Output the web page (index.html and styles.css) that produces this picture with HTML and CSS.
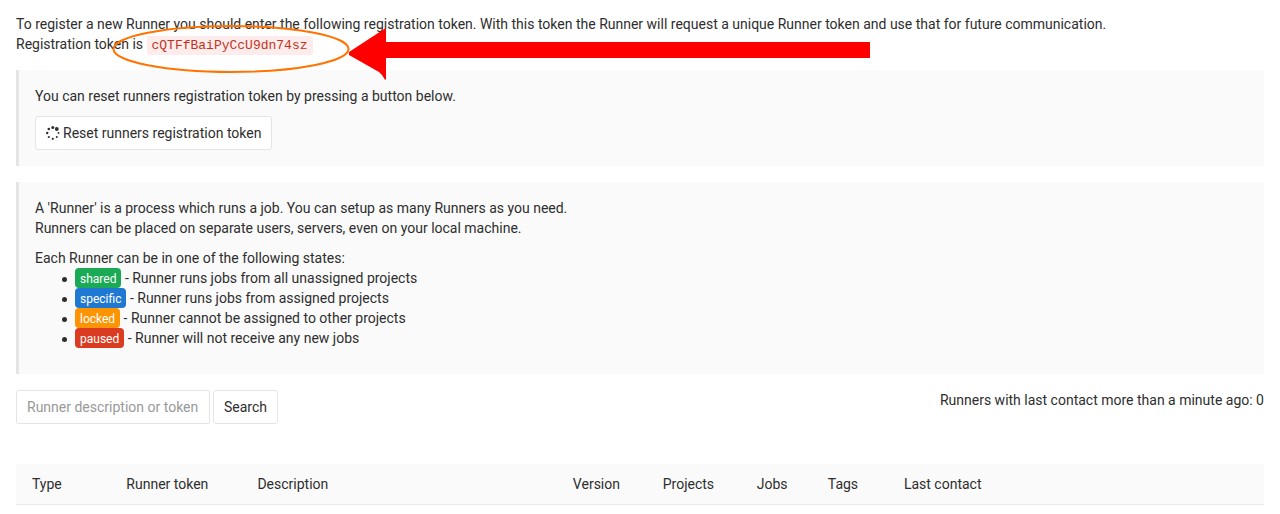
FILE: index.html
```html
<!DOCTYPE html>
<html lang="en">
<head>
<meta charset="utf-8">
<meta name="viewport" content="width=device-width, initial-scale=1">
<title>Runners</title>
<link rel="stylesheet" href="styles.css">
</head>
<body>
<main class="page">
  <section class="intro">
    <p>To register a new Runner you should enter the following registration token. With this token the Runner will request a unique Runner token and use that for future communication.<br>
    Registration token is <code class="token">cQTFfBaiPyCcU9dn74sz</code></p>
    <svg class="callout" width="760" height="60" viewBox="112 22 760 60" aria-hidden="true">
      <ellipse cx="231" cy="49" rx="117.500" ry="23" fill="none" stroke="#ff7400" stroke-width="2"/>
      <path d="M349 52 385 28.500H386V42H870V58H386V80L384.500 79 382 75 379 72 349 55Z" fill="#f00"/>
    </svg>
  </section>

  <section class="box">
    <p>You can reset runners registration token by pressing a button below.</p>
    <button class="btn" type="button">
      <svg class="spinner" width="14" height="14" viewBox="0 0 14 14" aria-hidden="true">
        <circle cx="6.800" cy="1.500" r="1.500"/>
        <circle cx="10.800" cy="3" r="1.900"/>
        <circle cx="12.500" cy="7" r="0.900"/>
        <circle cx="10.800" cy="11" r="1"/>
        <circle cx="6.800" cy="12.800" r="1.100"/>
        <circle cx="2.800" cy="11" r="1.100"/>
        <circle cx="1.200" cy="7" r="1.200"/>
        <circle cx="2.800" cy="3" r="1.300"/>
      </svg>
      Reset runners registration token</button>
  </section>

  <section class="box">
    <p>A 'Runner' is a process which runs a job. You can setup as many Runners as you need.<br>
    Runners can be placed on separate users, servers, even on your local machine.</p>
    <div>Each Runner can be in one of the following states:</div>
    <ul class="states">
      <li><span class="label shared">shared</span> - Runner runs jobs from all unassigned projects</li>
      <li><span class="label specific">specific</span> - Runner runs jobs from assigned projects</li>
      <li><span class="label locked">locked</span> - Runner cannot be assigned to other projects</li>
      <li><span class="label paused">paused</span> - Runner will not receive any new jobs</li>
    </ul>
  </section>

  <div class="toolbar">
    <form class="search">
      <input class="field" type="text" aria-label="Runner description or token" placeholder="Runner description or token">
      <button class="btn" type="submit">Search</button>
    </form>
    <div>Runners with last contact more than a minute ago: 0</div>
  </div>

  <table class="runners">
    <colgroup>
      <col class="c-type"><col class="c-token"><col class="c-desc"><col class="c-version"><col class="c-projects"><col class="c-jobs"><col class="c-tags"><col>
    </colgroup>
    <thead>
      <tr><th>Type</th><th>Runner token</th><th>Description</th><th>Version</th><th>Projects</th><th>Jobs</th><th>Tags</th><th>Last contact</th></tr>
    </thead>
  </table>
</main>
</body>
</html>
```
FILE: styles.css
```css
* { box-sizing: border-box; }
body {
  margin: 0;
  background: #fff;
  color: #2e2e2e;
  font: 14px/20px Roboto, "Noto Sans", sans-serif;
}
.page { padding: 14px 16px 8px; }
p { margin: 0 0 10px; }
.intro { position: relative; margin-bottom: 16px; }
.intro p { margin: 0; }
.token {
  padding: 2px 5px;
  border-radius: 3px;
  background: #fdeceb;
  color: #c0341d;
  font: 13px/15px "Liberation Mono", monospace;
}
.callout { position: absolute; left: 96px; top: 8px; pointer-events: none; }
.box {
  margin-bottom: 16px;
  padding: 16px;
  border-left: 3px solid #e5e5e5;
  background: #fafafa;
}
.btn {
  display: inline-flex;
  align-items: center;
  gap: 3px;
  height: 34px;
  padding: 0 10px;
  border: 1px solid #e5e5e5;
  border-radius: 3px;
  background: #fff;
  color: #2e2e2e;
  font: inherit;
}
.box .btn { display: flex; }
.spinner { fill: #2e2e2e; }
.states { margin: 0 0 10px; padding-left: 40px; list-style: none; }
.states li::before {
  content: "";
  display: inline-block;
  width: 5px;
  height: 5px;
  margin: 0 8px 0 -13px;
  border-radius: 50%;
  background: #2e2e2e;
  vertical-align: middle;
}
.label {
  display: inline-block;
  height: 20px;
  padding: 1px 5px 0;
  border-radius: 4px;
  color: #fff;
  font-size: 12px;
  line-height: 20px;
  vertical-align: top;
}
.shared { background: #1aaa55; }
.specific { background: #1f78d1; }
.locked { background: #fc9403; }
.paused { background: #db3b21; }
.toolbar { display: flex; justify-content: space-between; margin-bottom: 40px; }
.search { display: flex; gap: 3px; }
.field {
  width: 194px;
  height: 34px;
  padding: 0 10px;
  border: 1px solid #e5e5e5;
  border-radius: 2px;
  background: #fff;
  color: #2e2e2e;
  font: inherit;
}
.field::placeholder { color: #999; opacity: 1; }
.runners { width: 100%; border-collapse: collapse; table-layout: fixed; }
.runners th {
  padding: 10px 16px;
  border-bottom: 1px solid #e9e9e9;
  background: #fafafa;
  font-weight: 400;
  text-align: left;
  white-space: nowrap;
}
.c-type { width: 7.560%; }
.c-token { width: 10.500%; }
.c-desc { width: 25.280%; }
.c-version { width: 7.200%; }
.c-projects { width: 7.530%; }
.c-jobs { width: 5.700%; }
.c-tags { width: 6.100%; }
```
